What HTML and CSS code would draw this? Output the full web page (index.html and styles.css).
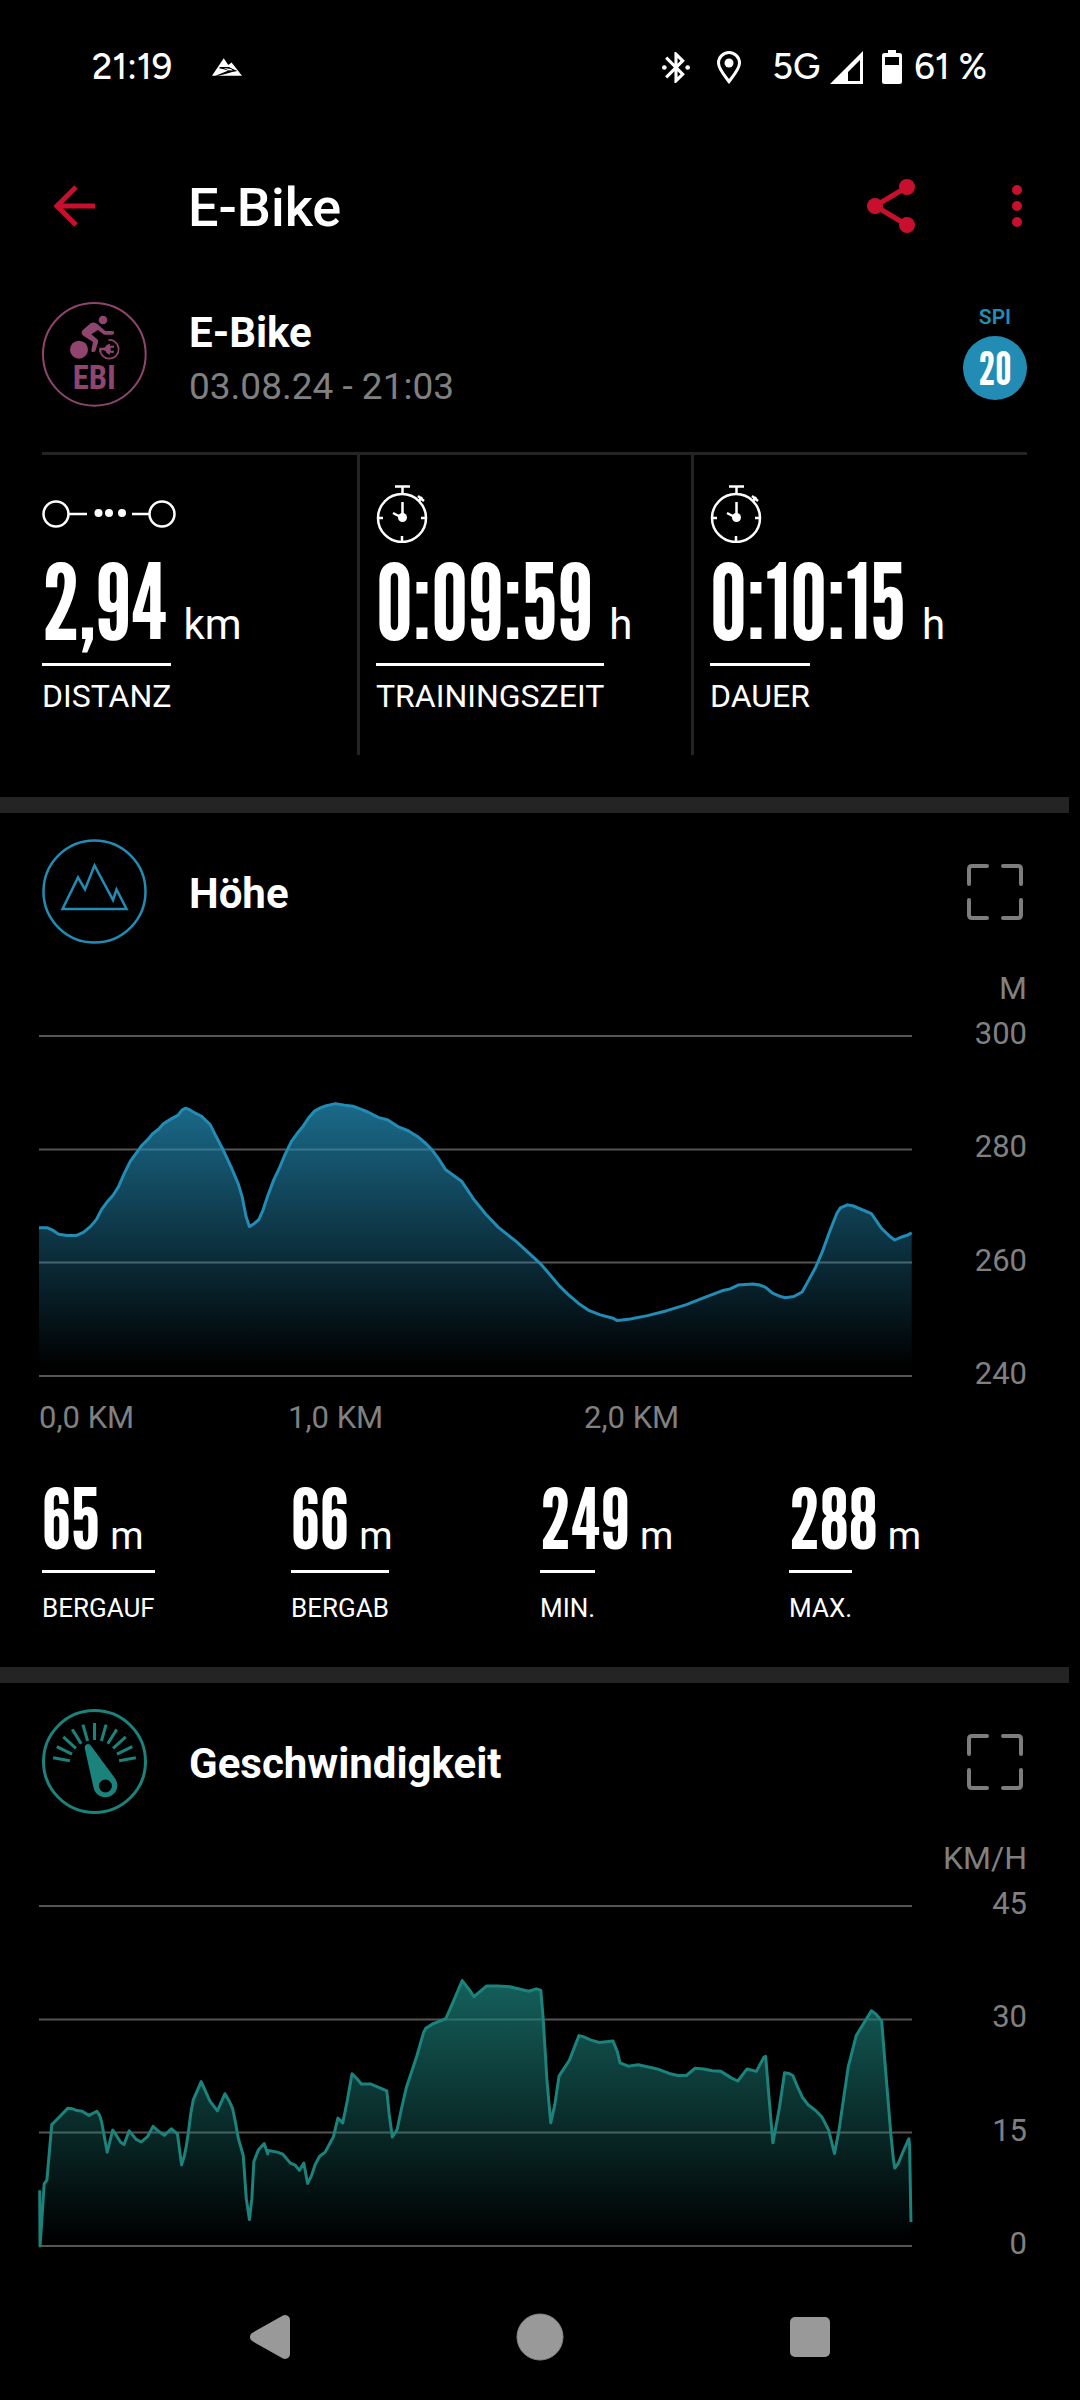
FILE: index.html
```html
<!DOCTYPE html>
<html lang="de">
<head>
<meta charset="utf-8">
<meta name="viewport" content="width=device-width, initial-scale=1">
<title>E-Bike</title>
<link rel="stylesheet" href="styles.css">
</head>
<body>
<div class="status-bar">
  <div class="status-left">
    <time>21:19</time>
    <svg class="icon-peak" viewBox="0 0 92 54" aria-hidden="true">
      <path fill="#fff" d="M0 54 36 0 50 21 60 13 92 54Z"/>
      <path fill="#000" d="M24 27 52 27 64 33 78 39 62 42 44 48 20 54 10 54 30 46 50 38 36 34 22 31Z"/>
      <path fill="#fff" d="M36 30 58 33 64 38 50 37Z"/>
    </svg>
  </div>
  <div class="status-right">
    <svg class="icon-bluetooth" viewBox="3 2 18 20" aria-hidden="true">
      <path fill="#fff" d="M17.71 7.71 12 2h-1v7.59L6.41 5 5 6.41 10.59 12 5 17.59 6.41 19 11 14.41V22h1l5.71-5.71L13.41 12zM13 5.83l1.88 1.88L13 9.59zm1.88 10.46L13 18.17v-3.76z"/>
      <circle cx="4.5" cy="12" r="1.5" fill="#fff"/><circle cx="19.5" cy="12" r="1.5" fill="#fff"/>
    </svg>
    <svg class="icon-pin" viewBox="0 0 24 33" aria-hidden="true">
      <path fill="none" stroke="#fff" stroke-width="3" d="M12 30.500C8 25 1.500 18 1.500 12a10.500 10.500 0 0 1 21 0c0 6-6.500 13-10.500 18.500Z"/>
      <circle cx="12" cy="12" r="4.500" fill="#fff"/>
    </svg>
    <span class="network">5G
      <svg class="icon-signal" viewBox="0 0 33 33" aria-hidden="true">
        <path fill="#fff" fill-rule="evenodd" d="M33 0V33H0ZM30 9 18 21V30H30Z"/>
      </svg>
    </span>
    <span class="battery">
      <svg class="icon-battery" viewBox="0 0 20 34" aria-hidden="true">
        <path fill="#fff" fill-rule="evenodd" d="M6 0H14V3H17.500A2.500 2.500 0 0 1 20 5.500V31.500A2.500 2.500 0 0 1 17.500 34H2.500A2.500 2.500 0 0 1 0 31.500V5.500A2.500 2.500 0 0 1 2.500 3H6ZM3 7V15H17V7Z"/>
      </svg>
      61 %</span>
  </div>
</div>

<header class="app-bar">
  <button class="icon-button back" type="button" aria-label="Zurück">
    <svg viewBox="0 0 42 42"><path fill="none" stroke="#c8102e" stroke-width="5" d="M23 2 4 21 23 40M4 21H42"/></svg>
  </button>
  <h1>E-Bike</h1>
  <button class="icon-button share" type="button" aria-label="Teilen">
    <svg viewBox="0 0 48 54"><path fill="none" stroke="#c8102e" stroke-width="5" d="M40 8 8 27 40 46"/><g fill="#c8102e"><circle cx="40" cy="8" r="8"/><circle cx="8" cy="27" r="8"/><circle cx="40" cy="46" r="8"/></g></svg>
  </button>
  <button class="icon-button more" type="button" aria-label="Mehr">
    <svg viewBox="0 0 10 44"><g fill="#c8102e"><circle cx="5" cy="6" r="5"/><circle cx="5" cy="22" r="5"/><circle cx="5" cy="38" r="5"/></g></svg>
  </button>
</header>

<main>
  <section class="summary">
    <div class="summary-head">
      <svg class="badge" viewBox="0 0 315 315" role="img" aria-label="EBI">
        <circle cx="157" cy="157" r="154" fill="none" stroke="#8f456d" stroke-width="6"/>
        <g fill="#8f456d">
          <circle cx="183" cy="54" r="13"/>
          <circle cx="111" cy="143" r="27"/>
          <path d="M146 64Q156 58 166 66L190 87H211A5 5 0 0 1 211 98H186L168 84 148 97 166 112Q170 116 168 122L160 147Q157 151 151 150 147 149 148 144L153 120 124 101Q114 92 123 83Z"/>
          <path d="M172 137H186L193 132V129L204 125V131H216V137H206V146H216V152H204V158L193 153V149L186 145H178V150H172Z"/>
          <text x="157" y="262" text-anchor="middle" class="badge-text">EBI</text>
        </g>
        <path fill="none" stroke="#8f456d" stroke-width="5" d="M199 114A28 28 0 1 1 174 142"/>
      </svg>
      <div class="summary-title">
        <h2>E-Bike</h2>
        <p>03.08.24 - 21:03</p>
      </div>
      <div class="spi"><span>SPI</span><strong>20</strong></div>
    </div>
    <dl class="totals">
      <div class="total">
        <svg class="icon-distance" viewBox="0 0 134 58" aria-hidden="true">
          <g fill="none" stroke="#fff" stroke-width="2.500"><circle cx="14" cy="29" r="12.500"/><circle cx="120" cy="29" r="12.500"/><path d="M27 29H45M90 29H107"/></g>
          <g fill="#fff"><circle cx="56.500" cy="28" r="4"/><circle cx="67" cy="28" r="4"/><circle cx="80" cy="28" r="4"/></g>
        </svg>
        <dd><b>2,94</b><span>km</span></dd>
        <dt>DISTANZ</dt>
      </div>
      <div class="total">
        <svg class="icon-watch" viewBox="0 0 52 58" aria-hidden="true">
          <g fill="none" stroke="#fff" stroke-width="2.500"><circle cx="26" cy="33" r="24"/><path d="M19 1.500H34M26.500 1V9M26.500 17V33L17 28M2 33H7M45 33H50M26 51V57M42 11 48 16M43 16 46 12"/></g>
          <circle cx="26.500" cy="32.500" r="4.500" fill="#fff"/>
        </svg>
        <dd><b>0:09:59</b><span>h</span></dd>
        <dt>TRAININGSZEIT</dt>
      </div>
      <div class="total">
        <svg class="icon-watch" viewBox="0 0 52 58" aria-hidden="true">
          <g fill="none" stroke="#fff" stroke-width="2.500"><circle cx="26" cy="33" r="24"/><path d="M19 1.500H34M26.500 1V9M26.500 17V33L17 28M2 33H7M45 33H50M26 51V57M42 11 48 16M43 16 46 12"/></g>
          <circle cx="26.500" cy="32.500" r="4.500" fill="#fff"/>
        </svg>
        <dd><b>0:10:15</b><span>h</span></dd>
        <dt>DAUER</dt>
      </div>
    </dl>
  </section>

  <section class="panel">
    <div class="panel-head">
      <svg class="badge" viewBox="0 0 105 105" aria-hidden="true">
        <g fill="none" stroke="#238cb5" stroke-width="2.500"><circle cx="52.500" cy="52.500" r="51"/><path d="M20.500 70 36 38.500 43 50.500 52.500 26.500 71 61 74.500 50.500 84.500 70Z"/></g>
      </svg>
      <h2>Höhe</h2>
      <button class="icon-button expand" type="button" aria-label="Vollbild">
        <svg viewBox="0 0 56 56"><path fill="none" stroke="#7d7d7d" stroke-width="4" stroke-linecap="round" d="M2 20V5Q2 2 5 2H20M36 2H51Q54 2 54 5V20M54 36V51Q54 54 51 54H36M20 54H5Q2 54 2 51V36"/></svg>
      </button>
    </div>
    <div class="chart">
      <div class="plot">
        <svg viewBox="0 0 2535 890" preserveAspectRatio="none" role="img" aria-label="Höhenprofil">
          <defs><linearGradient id="altitude-fill" gradientUnits="userSpaceOnUse" x1="0" y1="0" x2="0" y2="870"><stop offset="0" stop-color="#238cb5" stop-opacity=".95"/><stop offset="1" stop-color="#238cb5" stop-opacity="0"/></linearGradient></defs>
          <path class="grid" d="M0 0H2535M0 297H2535M0 593H2535M0 890H2535"/>
          <path fill="url(#altitude-fill)" d="M0 890V502L25 502 39 508 57 519 82 522 109 522 129 514 149 499 167 480 181 455 199 433 215 417 230 396 247 361 265 328 299 286 315 272 330 256 347 244 362 229 384 217 404 207 415 194 426 189 437 193 454 202 472 210 497 232 512 259 532 293 559 345 579 388 590 421 601 472 611 499 622 493 638 481 651 455 664 419 682 376 699 344 715 309 733 276 749 256 767 236 783 214 801 196 817 188 832 183 861 177 887 181 913 184 932 191 955 199 985 213 1013 220 1042 237 1072 248 1099 263 1124 282 1140 297 1160 321 1181 350 1227 380 1262 427 1297 466 1334 501 1387 539 1455 595 1485 626 1511 654 1537 677 1567 700 1598 719 1630 730 1667 739 1680 745 1717 741 1767 732 1823 719 1880 703 1933 684 1983 667 2007 662 2030 652 2073 649 2093 652 2110 658 2130 673 2150 681 2167 685 2192 682 2216 670 2235 639 2255 606 2275 564 2290 526 2305 491 2317 464 2327 450 2348 442 2365 445 2417 465 2447 504 2470 524 2485 534 2505 526 2523 521 2534 515V890Z"/>
          <path class="line altitude" d="M0 502 25 502 39 508 57 519 82 522 109 522 129 514 149 499 167 480 181 455 199 433 215 417 230 396 247 361 265 328 299 286 315 272 330 256 347 244 362 229 384 217 404 207 415 194 426 189 437 193 454 202 472 210 497 232 512 259 532 293 559 345 579 388 590 421 601 472 611 499 622 493 638 481 651 455 664 419 682 376 699 344 715 309 733 276 749 256 767 236 783 214 801 196 817 188 832 183 861 177 887 181 913 184 932 191 955 199 985 213 1013 220 1042 237 1072 248 1099 263 1124 282 1140 297 1160 321 1181 350 1227 380 1262 427 1297 466 1334 501 1387 539 1455 595 1485 626 1511 654 1537 677 1567 700 1598 719 1630 730 1667 739 1680 745 1717 741 1767 732 1823 719 1880 703 1933 684 1983 667 2007 662 2030 652 2073 649 2093 652 2110 658 2130 673 2150 681 2167 685 2192 682 2216 670 2235 639 2255 606 2275 564 2290 526 2305 491 2317 464 2327 450 2348 442 2365 445 2417 465 2447 504 2470 524 2485 534 2505 526 2523 521 2534 515"/>
        </svg>
        <div class="ticks"><span>0,0 KM</span><span>1,0 KM</span><span>2,0 KM</span></div>
      </div>
      <div class="axis">
        <span class="axis-unit">M</span>
        <div class="axis-values"><span>300</span><span>280</span><span>260</span><span>240</span></div>
      </div>
    </div>
    <dl class="details">
      <div><dd><b>65</b><span>m</span></dd><dt>BERGAUF</dt></div>
      <div><dd><b>66</b><span>m</span></dd><dt>BERGAB</dt></div>
      <div><dd><b>249</b><span>m</span></dd><dt>MIN.</dt></div>
      <div><dd><b>288</b><span>m</span></dd><dt>MAX.</dt></div>
    </dl>
  </section>

  <section class="panel">
    <div class="panel-head">
      <svg class="badge" viewBox="0 0 105 105" aria-hidden="true">
        <g fill="none" stroke="#1c827c" stroke-width="3">
          <circle cx="52.500" cy="52.500" r="51"/>
          <path d="M52.500 14V31" transform="rotate(-80 52.500 56)"/>
          <path d="M52.500 14V31" transform="rotate(-64 52.500 56)"/>
          <path d="M52.500 14V31" transform="rotate(-48 52.500 56)"/>
          <path d="M52.500 14V31" transform="rotate(-32 52.500 56)"/>
          <path d="M52.500 14V31" transform="rotate(-16 52.500 56)"/>
          <path d="M52.500 14V31"/>
          <path d="M52.500 14V31" transform="rotate(16 52.500 56)"/>
          <path d="M52.500 14V31" transform="rotate(32 52.500 56)"/>
          <path d="M52.500 14V31" transform="rotate(48 52.500 56)"/>
          <path d="M52.500 14V31" transform="rotate(64 52.500 56)"/>
          <path d="M52.500 14V31" transform="rotate(80 52.500 56)"/>
        </g>
        <path fill="#1c827c" fill-rule="evenodd" d="M42.600 38.500A3.400 3.400 0 0 1 48.800 36.500L73.500 70A12 12 0 1 1 51.500 78.500ZM63.400 70.500A6.500 6.500 0 1 0 63.400 83.500 6.500 6.500 0 1 0 63.400 70.500Z"/>
      </svg>
      <h2>Geschwindigkeit</h2>
      <button class="icon-button expand" type="button" aria-label="Vollbild">
        <svg viewBox="0 0 56 56"><path fill="none" stroke="#7d7d7d" stroke-width="4" stroke-linecap="round" d="M2 20V5Q2 2 5 2H20M36 2H51Q54 2 54 5V20M54 36V51Q54 54 51 54H36M20 54H5Q2 54 2 51V36"/></svg>
      </button>
    </div>
    <div class="chart">
      <div class="plot">
        <svg viewBox="0 0 2535 989" preserveAspectRatio="none" role="img" aria-label="Geschwindigkeitsverlauf">
          <defs><linearGradient id="speed-fill" gradientUnits="userSpaceOnUse" x1="0" y1="0" x2="0" y2="970"><stop offset="0" stop-color="#1c827c" stop-opacity=".95"/><stop offset="1" stop-color="#1c827c" stop-opacity="0"/></linearGradient></defs>
          <path class="grid" d="M0 0H2535M0 330H2535M0 659H2535M0 989H2535"/>
          <path fill="url(#speed-fill)" d="M2 989 8 917 15 808 23 797 37 636 54 619 84 588 97 590 107 594 125 597 145 609 168 597 176 609 182 629 198 716 214 652 222 663 237 687 247 694 262 654 282 679 297 686 315 671 331 641 349 657 364 667 384 648 402 663 414 753 422 727 428 697 434 657 441 602 448 564 471 511 496 567 518 596 540 546 552 567 562 589 570 627 579 677 593 725 602 852 611 912 618 852 624 743 637 710 654 691 664 721 666 711 692 716 708 722 730 748 744 754 756 769 769 748 780 807 791 785 802 752 815 728 831 716 855 671 868 617 882 631 895 567 909 488 922 501 936 518 964 518 1010 538 1017 607 1026 672 1040 650 1052 592 1067 527 1097 437 1117 367 1123 356 1145 342 1181 328 1197 292 1229 217 1252 247 1263 264 1299 233 1332 233 1367 235 1422 248 1444 241 1457 245 1464 327 1475 507 1486 631 1498 577 1510 495 1540 449 1568 377 1580 380 1603 390 1627 397 1667 393 1679 423 1687 456 1711 466 1740 462 1795 474 1830 487 1855 493 1880 493 1905 472 1930 474 1955 479 1980 481 2010 500 2029 509 2056 474 2083 481 2105 440 2110 437 2119 547 2131 689 2150 587 2165 485 2177 487 2189 493 2203 527 2217 557 2233 578 2255 595 2273 613 2293 652 2310 720 2323 652 2350 467 2373 377 2417 305 2430 314 2447 335 2455 437 2473 657 2481 737 2485 762 2495 749 2510 712 2526 677 2528 697 2532 919V989Z"/>
          <path class="line speed" d="M2 827 3 989 8 917 15 808 23 797 37 636 54 619 84 588 97 590 107 594 125 597 145 609 168 597 176 609 182 629 198 716 214 652 222 663 237 687 247 694 262 654 282 679 297 686 315 671 331 641 349 657 364 667 384 648 402 663 414 753 422 727 428 697 434 657 441 602 448 564 471 511 496 567 518 596 540 546 552 567 562 589 570 627 579 677 593 725 602 852 611 912 618 852 624 743 637 710 654 691 664 721 666 711 692 716 708 722 730 748 744 754 756 769 769 748 780 807 791 785 802 752 815 728 831 716 855 671 868 617 882 631 895 567 909 488 922 501 936 518 964 518 1010 538 1017 607 1026 672 1040 650 1052 592 1067 527 1097 437 1117 367 1123 356 1145 342 1181 328 1197 292 1229 217 1252 247 1263 264 1299 233 1332 233 1367 235 1422 248 1444 241 1457 245 1464 327 1475 507 1486 631 1498 577 1510 495 1540 449 1568 377 1580 380 1603 390 1627 397 1667 393 1679 423 1687 456 1711 466 1740 462 1795 474 1830 487 1855 493 1880 493 1905 472 1930 474 1955 479 1980 481 2010 500 2029 509 2056 474 2083 481 2105 440 2110 437 2119 547 2131 689 2150 587 2165 485 2177 487 2189 493 2203 527 2217 557 2233 578 2255 595 2273 613 2293 652 2310 720 2323 652 2350 467 2373 377 2417 305 2430 314 2447 335 2455 437 2473 657 2481 737 2485 762 2495 749 2510 712 2526 677 2528 697 2532 919"/>
        </svg>
      </div>
      <div class="axis">
        <span class="axis-unit">KM/H</span>
        <div class="axis-values"><span>45</span><span>30</span><span>15</span><span>0</span></div>
      </div>
    </div>
  </section>
</main>

<nav class="system-nav">
  <button class="icon-button" type="button" aria-label="Zurück"><svg class="nav-icon" viewBox="0 0 48 48"><path fill="#999" stroke="#999" stroke-width="10" stroke-linejoin="round" d="M9 24 39 7V41Z"/></svg></button>
  <button class="icon-button" type="button" aria-label="Startseite"><svg class="nav-icon" viewBox="0 0 48 48"><circle cx="24" cy="24" r="23" fill="#999" stroke="#888" stroke-width="1"/></svg></button>
  <button class="icon-button" type="button" aria-label="Übersicht"><svg class="nav-icon" viewBox="0 0 48 48"><rect x="4" y="4" width="40" height="40" rx="5" fill="#999"/></svg></button>
</nav>
</body>
</html>
```
FILE: styles.css
```css
* {
  box-sizing: border-box;
}

body {
  margin: 0;
  min-height: 100vh;
  display: flex;
  flex-direction: column;
  background: #000;
  color: #fff;
  font-family: Roboto, "Noto Sans", sans-serif;
}

h1, h2, p, dl, dd, dt {
  margin: 0;
}

svg {
  display: block;
  flex: none;
}

.icon-button {
  display: flex;
  padding: 0;
  border: 0;
  background: none;
}

/* Status bar */
.status-bar {
  display: flex;
  justify-content: space-between;
  align-items: center;
  height: 134px;
  padding: 0 93px 0 92px;
  font: 500 36px/44px Figtree, Inter, sans-serif;
}

.status-left,
.status-right,
.network,
.battery {
  display: flex;
  align-items: center;
}

.status-left { gap: 40px; }
.status-right { gap: 27px; }
.network { gap: 10px; margin-left: 4px; }
.battery { gap: 12px; margin-left: -8px; }

.icon-peak { width: 30px; height: 18px; }
.icon-bluetooth { width: 28px; height: 33px; }
.icon-pin { width: 24px; height: 33px; }
.icon-signal { width: 33px; height: 33px; }
.icon-battery { width: 20px; height: 34px; }

/* App bar */
.app-bar {
  display: flex;
  align-items: center;
  height: 144px;
  padding: 0 58px 0 53px;
}

.app-bar h1 {
  flex: 1;
  margin-left: 93px;
  padding-top: 3px;
  font-size: 54px;
  line-height: 64px;
  font-weight: 500;
}

.back svg { width: 42px; height: 42px; }
.share svg { width: 48px; height: 54px; }
.more { margin-left: 97px; }
.more svg { width: 10px; height: 44px; }

/* Sections */
main {
  margin-right: 11px;
}

.summary {
  padding: 24px 42px 42px;
}

.badge {
  width: 105px;
  height: 105px;
}

.badge-text {
  font: 700 98px "Roboto Condensed", Roboto, sans-serif;
}

.summary-head {
  display: flex;
  align-items: flex-start;
  padding-bottom: 38px;
}

.summary-title {
  flex: 1;
  margin-left: 42px;
  padding-top: 4px;
  color: #808080;
  font-size: 37px;
  line-height: 54px;
}

h2 {
  color: #fff;
  font-size: 42px;
  line-height: 54px;
  font-weight: 700;
}

.spi {
  display: flex;
  flex-direction: column;
  align-items: center;
  gap: 4px;
  color: #238cb5;
  font-size: 21px;
  line-height: 30px;
  font-weight: 600;
}

.spi strong {
  width: 64px;
  border-radius: 50%;
  background: #238cb5;
  color: #fff;
  text-align: center;
  font: 400 46px/64px "League Gothic", "Bebas Neue", "Roboto Condensed", sans-serif;
}

/* Values with an underlined caption */
dd {
  display: flex;
  align-items: baseline;
}

dd b {
  font-family: "League Gothic", "Bebas Neue", "Roboto Condensed", sans-serif;
  font-weight: 400;
}

dt {
  width: max-content;
  border-top: 3px solid #fff;
}

.totals {
  display: grid;
  grid-template-columns: 315fr 334fr 336fr;
  border-top: 3px solid #242424;
}

.total {
  padding: 30px 0 43px;
}

.total + .total {
  padding-left: 16px;
  border-left: 3px solid #242424;
}

.total dd {
  gap: 16px;
  height: 120px;
  font-size: 42px;
  line-height: 116px;
}

.total b {
  font-size: 104px;
}

.total dt {
  padding-top: 14px;
  font-size: 32px;
  line-height: 32px;
}

.icon-distance { width: 134px; height: 58px; }
.icon-watch { width: 52px; height: 58px; }

.panel {
  padding: 26px 42px 0;
  border-top: 16px solid #242424;
}

.panel-head {
  display: flex;
  align-items: center;
}

.panel-head h2 {
  flex: 1;
  margin-left: 42px;
  padding-top: 4px;
}

.expand {
  margin-right: 4px;
}

.expand svg {
  width: 56px;
  height: 56px;
}

/* Charts */
.chart {
  display: flex;
  align-items: flex-start;
  margin: 28px 0 0 -3px;
  color: #808080;
  font-size: 31px;
  line-height: 32px;
}

.plot {
  flex: 1;
  padding-top: 64px;
}

.plot svg {
  width: 100%;
  height: 340px;
  overflow: visible;
}

.grid {
  fill: none;
  stroke: #555;
  stroke-width: 2px;
  vector-effect: non-scaling-stroke;
}

.line {
  fill: none;
  stroke-width: 3px;
  stroke-linejoin: round;
  vector-effect: non-scaling-stroke;
}

.altitude { stroke: #238cb5; }
.speed { stroke: #1c827c; }

.ticks {
  display: grid;
  grid-template-columns: 249fr 296fr 328fr;
  padding-top: 26px;
}

.axis {
  width: 115px;
  text-align: right;
}

.axis-unit {
  display: block;
  margin-bottom: 14px;
  font-size: 32px;
}

.axis-values {
  display: flex;
  flex-direction: column;
  justify-content: space-between;
  height: 372px;
}

.details {
  display: grid;
  grid-template-columns: repeat(4, 1fr);
  margin-right: -11px;
  padding-bottom: 46px;
}

.details dd {
  gap: 10px;
  height: 136px;
  padding-top: 32px;
  font-size: 38px;
  line-height: 104px;
}

.details b {
  font-size: 85px;
}

.details dt {
  padding-top: 22px;
  font-size: 26px;
  line-height: 26px;
}

/* System navigation */
.system-nav {
  display: grid;
  grid-template-columns: repeat(3, 1fr);
  justify-items: center;
  align-items: center;
  height: 126px;
  margin-top: auto;
  padding: 0 12.5%;
}

.nav-icon {
  width: 48px;
  height: 48px;
}
```
